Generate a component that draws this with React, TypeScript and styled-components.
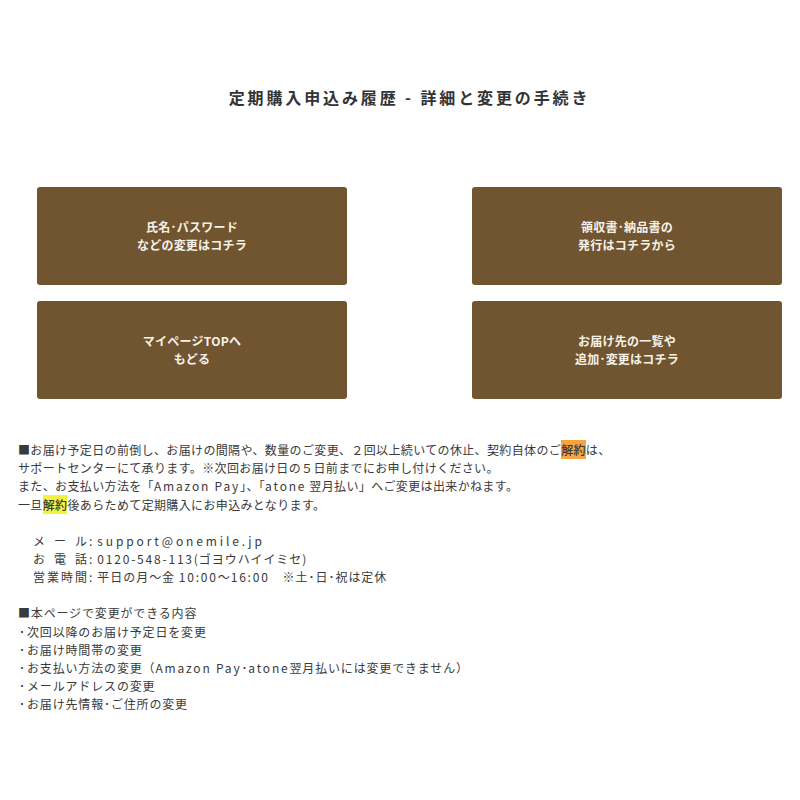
import React from 'react';
import styled, { createGlobalStyle } from 'styled-components';

const GlobalStyle = createGlobalStyle`
	body {
		margin: 0;
		background: #fff;
		font-family: "Noto Sans CJK JP", "Noto Sans", sans-serif;
		color: #3a3a3a;
	}
`;

const Page = styled.div`
	padding: 85px 18px 40px 18px;
`;

const Title = styled.h1`
	margin: 0 0 0 19px;
	text-align: center;
	font-size: 16px;
	line-height: 24px;
	font-weight: 700;
	letter-spacing: 0.18em;
	color: #333;
`;

const ButtonGrid = styled.div`
	display: grid;
	grid-template-columns: 310px 310px;
	justify-content: space-between;
	row-gap: 16px;
	margin: 78px 0 0 19px;
`;

const LinkButton = styled.a`
	display: flex;
	align-items: center;
	justify-content: center;
	height: 98px;
	background: #705530;
	border-radius: 3px;
	color: #f7f2e8;
	text-decoration: none;
	text-align: center;
	font-size: 12px;
	line-height: 18px;
	font-weight: 700;
	letter-spacing: 0.02em;
	cursor: pointer;
`;

const Notes = styled.div`
	margin-top: 42px;
	font-size: 12px;
	line-height: 18.2px;
`;

const Para = styled.p<{ $indent?: number; $spacing?: number }>`
	margin: 0 0 18px;
	padding-left: ${p => p.$indent || 0}px;
	letter-spacing: ${p => p.$spacing ?? 0.03}em;
`;

const Mark = styled.span<{ $tone: 'orange' | 'yellow' }>`
	background: ${p => (p.$tone === 'orange' ? '#f5a444' : '#f3f23f')};
	font-weight: 500;
	padding: 1px 0;
`;

const Lat = styled.span<{ $wide?: boolean }>`
	letter-spacing: ${p => (p.$wide ? 0.24 : 0.15)}em;
`;

const Label = styled.span`
	display: inline-block;
	width: 54px;
	white-space: nowrap;
	letter-spacing: 0;
	text-align: justify;
	text-align-last: justify;
	margin-right: 2px;
`;

const Colon = styled.span`
	margin-right: 4px;
`;

const Dot = styled.span`
	display: inline-block;
	width: 9px;
	text-align: center;
`;

const links = [
	['氏名･パスワード', 'などの変更はコチラ'],
	['領収書･納品書の', '発行はコチラから'],
	['マイページTOPへ', 'もどる'],
	['お届け先の一覧や', '追加･変更はコチラ'],
];

const changes: React.ReactNode[] = [
	'次回以降のお届け予定日を変更',
	'お届け時間帯の変更',
	<>
		お支払い方法の変更（<Lat>Amazon Pay</Lat>･<Lat>atone</Lat>翌月払いには変更できません）
	</>,
	'メールアドレスの変更',
	'お届け先情報･ご住所の変更',
];

const App: React.FC = () => (
	<>
		<GlobalStyle />
		<Page>
			<Title>定期購入申込み履歴 - 詳細と変更の手続き</Title>

			<ButtonGrid>
				{links.map(([a, b]) => (
					<LinkButton key={a}>
						<span>
							{a}
							<br />
							{b}
						</span>
					</LinkButton>
				))}
			</ButtonGrid>

			<Notes>
				<Para>
					■お届け予定日の前倒し、お届けの間隔や、数量のご変更、２回以上続いての休止、契約自体のご<Mark $tone="orange">解約</Mark>は、
					<br />
					サポートセンターにて承ります。※次回お届け日の５日前までにお申し付けください。
					<br />
					また、お支払い方法を「<Lat>Amazon Pay</Lat>」、「<Lat>atone</Lat> 翌月払い」へご変更は出来かねます。
					<br />
					一旦<Mark $tone="yellow">解約</Mark>後あらためて定期購入にお申込みとなります。
				</Para>

				<Para $indent={15} $spacing={0.08}>
					<Label>メール</Label><Colon>:</Colon><Lat $wide>support@onemile.jp</Lat>
					<br />
					<Label>お電話</Label><Colon>:</Colon><Lat>0120-548-113</Lat>(ゴヨウハイイミセ)
					<br />
					<Label>営業時間</Label><Colon>:</Colon>平日の月〜金 <Lat>10:00</Lat>〜<Lat>16:00</Lat>　※土･日･祝は定休
				</Para>

				<Para $spacing={0.07}>
					■本ページで変更ができる内容
					{changes.map((c, i) => (
						<React.Fragment key={i}>
							<br />
							<Dot>･</Dot>
							{c}
						</React.Fragment>
					))}
				</Para>
			</Notes>
		</Page>
	</>
);

export default App;
